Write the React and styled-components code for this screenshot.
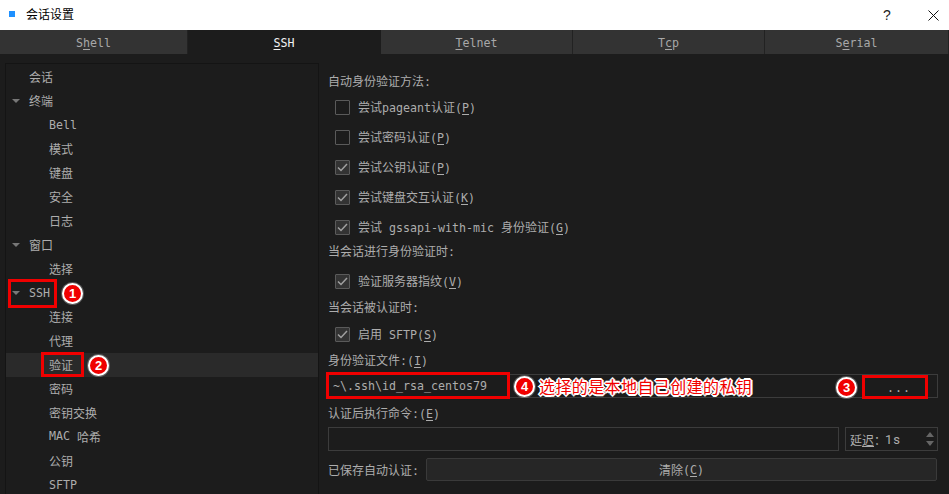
import React from 'react';
import styled, { createGlobalStyle } from 'styled-components';

const GlobalStyle = createGlobalStyle`
  html, body { margin: 0; padding: 0; background: #1c1c1c; }
  * { box-sizing: border-box; }
`;

const cjk = `"Noto Sans CJK SC", "Noto Sans", sans-serif`;

const Window = styled.div`
  width: 949px;
  height: 494px;
  overflow: hidden;
  display: flex;
  flex-direction: column;
  background: #1c1c1c;
  color: #adadad;
  font-family: ${cjk};
  font-size: 12px;
`;

const TitleBar = styled.div`
  height: 30px;
  background: #fff;
  color: #000;
  display: flex;
  align-items: center;
  padding-left: 9px;
`;

const TitleIcon = styled.span`
  width: 6px;
  height: 6px;
  background: #1e90ff;
  margin-right: 11px;
  margin-top: -2px;
`;

const TitleText = styled.span`
  flex: 1;
  line-height: 28px;
  margin-bottom: 2px;
`;

const HelpButton = styled.span`
  width: 20px;
  margin-right: 31px;
  text-align: center;
  font-family: "Liberation Sans", sans-serif;
  font-size: 14px;
  color: #222;
`;

const CloseButton = styled.span`
  width: 21px;
  display: flex;
`;

const Tabs = styled.div`
  height: 24px;
  display: flex;
`;

const Tab = styled.div`
  width: ${(p) => p.$width}px;
  padding-top: 1px;
  display: flex;
  align-items: center;
  justify-content: center;
  background: ${(p) => (p.$active ? '#1c1c1c' : '#333333')};
  color: ${(p) => (p.$active ? '#f2f2f2' : '#a8a8a8')};
  border-right: 1px solid ${(p) => (p.$active ? '#1c1c1c' : '#222222')};
`;

const M = styled.span`
  font-family: "DejaVu Sans Mono", monospace;
  font-size: 11.63px;
  white-space: pre;
`;

const Key = styled.u`
  font-family: "DejaVu Sans Mono", monospace;
  font-size: 11.63px;
  text-underline-offset: 2px;
`;

const Main = styled.div`
  flex: 1;
  min-height: 0;
  display: flex;
  padding: 9px 11px 0 5px;
`;

const Tree = styled.div`
  width: 314px;
  height: 440px;
  padding-top: 1px;
  border: 1px solid #141414;
  border-bottom: 0;
  flex-shrink: 0;
  overflow: hidden;
`;

const TreeRow = styled.div`
  position: relative;
  height: 24px;
  display: flex;
  align-items: center;
  padding-left: ${(p) => (p.$child ? 43 : 23)}px;
  padding-bottom: ${(p) => (p.$latin ? 0 : 2)}px;
  background: ${(p) => (p.$selected ? '#2a2a2a' : 'transparent')};
`;

const Arrow = styled.span`
  position: absolute;
  left: 6px;
  top: 10px;
  border-left: 4px solid transparent;
  border-right: 4px solid transparent;
  border-top: 4px solid #777;
`;

const RedBox = styled.span`
  position: absolute;
  left: ${(p) => p.$left}px;
  top: ${(p) => p.$top}px;
  width: ${(p) => p.$w}px;
  height: ${(p) => p.$h}px;
  border: 3px solid #f00000;
`;

const Badge = styled.span`
  position: absolute;
  left: ${(p) => p.$left}px;
  top: ${(p) => p.$top}px;
  width: 21px;
  height: 21px;
  border-radius: 50%;
  border: 2px solid #fff;
  box-shadow: 0 0 0 1px rgba(255, 255, 255, 0.25);
  background: #f00000;
  color: #fff;
  display: flex;
  align-items: center;
  justify-content: center;
  font-family: "Liberation Sans", sans-serif;
  font-size: 13px;
  font-weight: 700;
`;

const Content = styled.div`
  flex: 1;
  min-width: 0;
  margin-left: 9px;
  display: flex;
  flex-direction: column;
`;

const Label = styled.div`
  height: 18px;
  line-height: 18px;
  margin-top: ${(p) => p.$mt || 0}px;
`;

const CheckRow = styled.div`
  height: 30px;
  display: flex;
  align-items: center;
  padding-left: 7px;
  margin-top: ${(p) => p.$mt || 0}px;
`;

const CheckText = styled.span`
  margin-bottom: 2px;
`;

const Box = styled.span`
  width: 15px;
  height: 15px;
  border: 1px solid #5a5a5a;
  border-radius: 1px;
  margin-right: 8px;
  display: flex;
  align-items: center;
  justify-content: center;
  background: ${(p) => (p.$checked ? '#333333' : 'transparent')};
`;

const Field = styled.div`
  position: relative;
  height: 24px;
  width: ${(p) => p.$width || '100%'};
  border: 1px solid #3c3c3c;
  margin-top: ${(p) => p.$mt || 0}px;
  display: flex;
  align-items: center;
  padding-left: 4px;
`;

const Hint = styled.span`
  position: absolute;
  left: 210px;
  top: 0;
  line-height: 22px;
  font-size: 16px;
  letter-spacing: 0.4px;
  white-space: nowrap;
  color: #f00000;
  text-shadow: 1px 0 #fff, -1px 0 #fff, 0 1px #fff, 0 -1px #fff, 1px 1px #fff, -1px -1px #fff, 1px -1px #fff, -1px 1px #fff,
    2px 0 #fff, -2px 0 #fff, 0 2px #fff, 0 -2px #fff;
`;

const Dots = styled.span`
  position: absolute;
  left: 558px;
  top: 1px;
  line-height: 22px;
  letter-spacing: 1px;
`;

const InlineRow = styled.div`
  display: flex;
  align-items: center;
  margin-top: ${(p) => p.$mt || 0}px;
  gap: ${(p) => p.$gap || 0}px;
`;

const SpinBox = styled.div`
  position: relative;
  width: 93px;
  height: 24px;
  border: 1px solid #3c3c3c;
  display: flex;
  align-items: center;
  padding-left: 4px;
`;

const SpinValue = styled.span`
  font-family: "Roboto", sans-serif;
  font-size: 13px;
  letter-spacing: 1px;
  margin-left: -1px;
`;

const SpinUp = styled.span`
  position: absolute;
  right: 3px;
  top: 4px;
  border-left: 4px solid transparent;
  border-right: 4px solid transparent;
  border-bottom: 5px solid #666;
`;

const SpinDown = styled(SpinUp)`
  top: 13px;
  border-bottom: 0;
  border-top: 5px solid #666;
`;

const Button = styled.div`
  width: 511px;
  height: 23px;
  margin-left: 7px;
  background: #262626;
  border: 1px solid #3a3a3a;
  border-radius: 2px;
  display: flex;
  align-items: center;
  justify-content: center;
`;

const tabs = [
  { width: 188, label: <M>S<Key>h</Key>ell</M> },
  { width: 193, label: <M><Key>S</Key>SH</M>, active: true },
  { width: 192, label: <M><Key>T</Key>elnet</M> },
  { width: 192, label: <M>T<Key>c</Key>p</M> },
  { width: 184, label: <M>S<Key>e</Key>rial</M> },
];

const treeRows = [
  { label: '会话' },
  { label: '终端', open: true },
  { label: <M>Bell</M>, child: true, latin: true },
  { label: '模式', child: true },
  { label: '键盘', child: true },
  { label: '安全', child: true },
  { label: '日志', child: true },
  { label: '窗口', open: true },
  { label: '选择', child: true },
  {
    label: <M>SSH</M>,
    open: true,
    latin: true,
    marks: (
      <>
        <RedBox $left={2} $top={-2} $w={49} $h={29} />
        <Badge $left={56} $top={2}>1</Badge>
      </>
    ),
  },
  { label: '连接', child: true },
  { label: '代理', child: true },
  {
    label: '验证',
    child: true,
    selected: true,
    marks: (
      <>
        <RedBox $left={35} $top={-1} $w={43} $h={25} />
        <Badge $left={82} $top={2}>2</Badge>
      </>
    ),
  },
  { label: '密码', child: true },
  { label: '密钥交换', child: true },
  { label: <><M>MAC </M>哈希</>, child: true },
  { label: '公钥', child: true },
  { label: <M>SFTP</M>, child: true, latin: true },
];

function Check({ checked, mt, children }) {
  return (
    <CheckRow $mt={mt}>
      <Box $checked={checked}>
        {checked && (
          <svg width="11" height="9" viewBox="0 0 11 9" fill="none">
            <path d="M1 4.5 L4 7.5 L10 1" stroke="#a0a0a0" strokeWidth="1.5" />
          </svg>
        )}
      </Box>
      <CheckText>{children}</CheckText>
    </CheckRow>
  );
}

export default function App() {
  return (
    <Window>
      <GlobalStyle />
      <TitleBar>
        <TitleIcon />
        <TitleText>会话设置</TitleText>
        <HelpButton>?</HelpButton>
        <CloseButton>
          <svg width="11" height="11" viewBox="0 0 11 11" fill="none">
            <path d="M0.5 0.5 L10.5 10.5 M10.5 0.5 L0.5 10.5" stroke="#111" strokeWidth="1" />
          </svg>
        </CloseButton>
      </TitleBar>
      <Tabs>
        {tabs.map((tab, i) => (
          <Tab key={i} $width={tab.width} $active={tab.active}>{tab.label}</Tab>
        ))}
      </Tabs>
      <Main>
        <Tree>
          {treeRows.map((row, i) => (
            <TreeRow key={i} $child={row.child} $selected={row.selected} $latin={row.latin}>
              {row.open && <Arrow />}
              {row.label}
              {row.marks}
            </TreeRow>
          ))}
        </Tree>
        <Content>
          <Label $mt={9}>自动身份验证方法<M>:</M></Label>
          <Check mt={2}>尝试<M>pageant</M>认证<M>(<Key>P</Key>)</M></Check>
          <Check>尝试密码认证<M>(<Key>P</Key>)</M></Check>
          <Check checked>尝试公钥认证<M>(<Key>P</Key>)</M></Check>
          <Check checked>尝试键盘交互认证<M>(<Key>K</Key>)</M></Check>
          <Check checked>尝试<M> gssapi-with-mic </M>身份验证<M>(<Key>G</Key>)</M></Check>
          <Label>当会话进行身份验证时<M>:</M></Label>
          <Check checked mt={6}>验证服务器指纹<M>(<Key>V</Key>)</M></Check>
          <Label $mt={2}>当会话被认证时<M>:</M></Label>
          <Check checked mt={3}>启用<M> SFTP(<Key>S</Key>)</M></Check>
          <Label $mt={2}>身份验证文件<M>:(<Key>I</Key>)</M></Label>
          <Field $mt={5}>
            <M>~\.ssh\id_rsa_centos79</M>
            <RedBox $left={-3} $top={-3} $w={184} $h={27} />
            <Badge $left={185} $top={1}>4</Badge>
            <Hint>选择的是本地自己创建的私钥</Hint>
            <Badge $left={507} $top={2}>3</Badge>
            <Dots><M>...</M></Dots>
            <RedBox $left={533} $top={0} $w={66} $h={24} />
          </Field>
          <Label $mt={6}>认证后执行命令<M>:(<Key>E</Key>)</M></Label>
          <InlineRow $mt={5} $gap={6}>
            <Field $width="511px" />
            <SpinBox>
              <span>延<u>迟</u>：</span>
              <SpinValue>1s</SpinValue>
              <SpinUp />
              <SpinDown />
            </SpinBox>
          </InlineRow>
          <InlineRow $mt={7}>
            <span>已保存自动认证<M>:</M></span>
            <Button>清除<M>(<Key>C</Key>)</M></Button>
          </InlineRow>
        </Content>
      </Main>
    </Window>
  );
}
